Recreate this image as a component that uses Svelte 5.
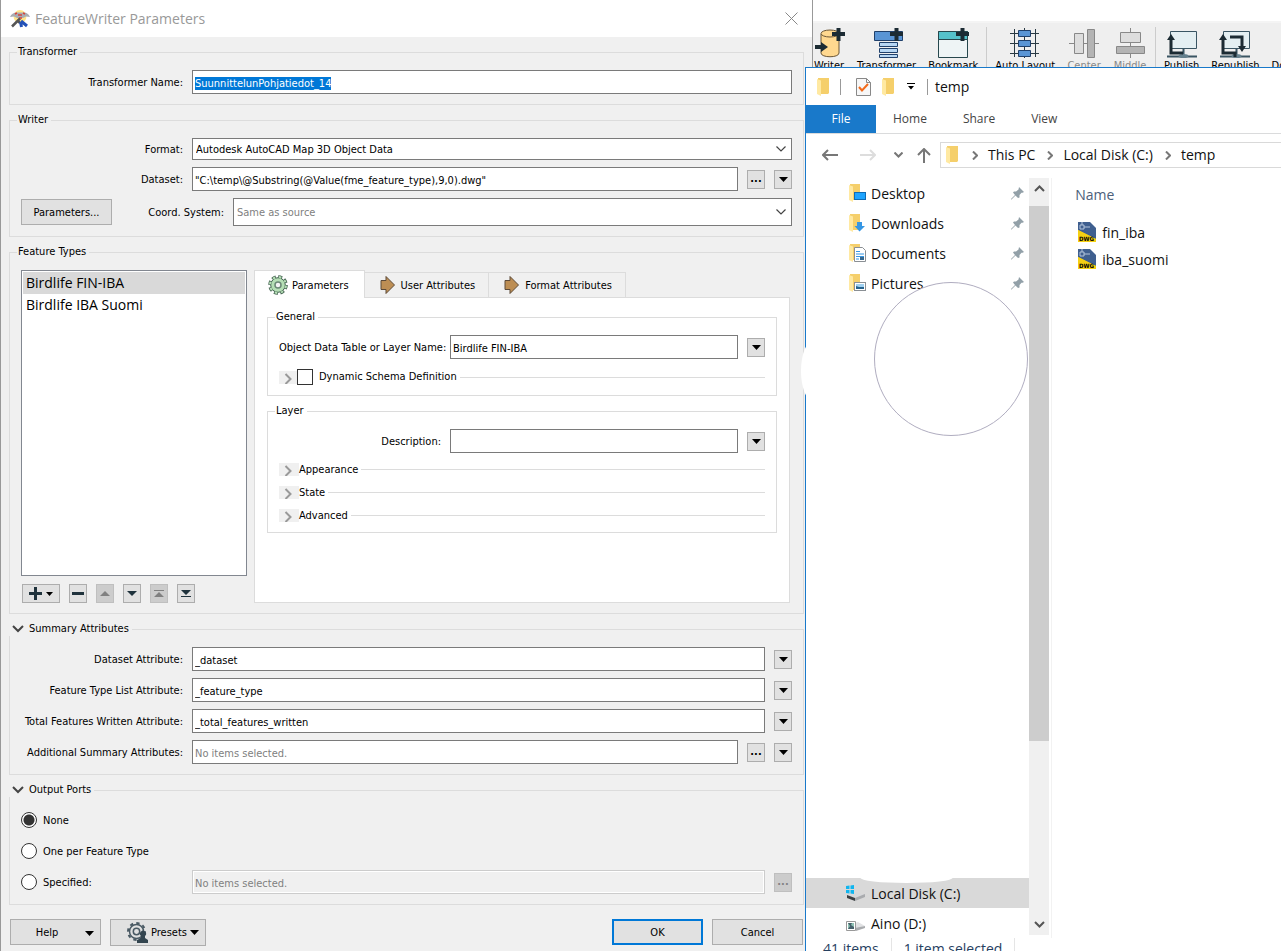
<script>
  import { onMount } from 'svelte';

  let transformerName = $state('SuunnittelunPohjatiedot_14');
  let dataset = $state('"C:\\temp\\@Substring(@Value(fme_feature_type),9,0).dwg"');
  let layerName = $state('Birdlife FIN-IBA');
  let description = $state('');
  let port = $state('none');
  let selected = $state(0);
  let activeTab = $state(0);
  let nameInput;

  const featureTypes = ['Birdlife FIN-IBA', 'Birdlife IBA Suomi'];
  const tabs = ['Parameters', 'User Attributes', 'Format Attributes'];
  const sections = ['Appearance', 'State', 'Advanced'];
  const listActions = ['minus', 'up', 'down', 'top', 'bottom'];
  const summary = $state([
    { id: 'dataset-attr', label: 'Dataset Attribute:', value: '_dataset' },
    { id: 'type-attr', label: 'Feature Type List Attribute:', value: '_feature_type' },
    { id: 'total-attr', label: 'Total Features Written Attribute:', value: '_total_features_written' },
  ]);
  const tools = [
    { name: 'Writer' },
    { name: 'Transformer' },
    { name: 'Bookmark' },
    { sep: true },
    { name: 'Auto Layout' },
    { name: 'Center', off: true },
    { name: 'Middle', off: true },
    { sep: true },
    { name: 'Publish' },
    { name: 'Republish' },
    { name: 'Download' },
  ];
  const places = ['Desktop', 'Downloads', 'Documents', 'Pictures'];
  const files = ['fin_iba', 'iba_suomi'];

  onMount(() => {
    // the name is ready to be typed over when the dialog opens
    nameInput.focus();
    nameInput.select();
  });
</script>

{#snippet arrow()}
  <svg class="arrow" width="9" height="5" viewBox="0 0 9 5"><path d="M0 0h9L4.500 5z" fill="currentColor" /></svg>
{/snippet}

{#snippet menuButton(label)}
  <button class="mini" aria-label={label}>{@render arrow()}</button>
{/snippet}

{#snippet chevron()}
  <svg class="chevron" width="10" height="6" viewBox="0 0 10 6"><path d="M.5.5 5 5 9.500.5" fill="none" stroke="#444" stroke-width="1.200" /></svg>
{/snippet}

{#snippet expander()}
  <svg class="expander" width="20" height="13" viewBox="0 0 20 13"><rect width="20" height="13" fill="#f0f0f0" /><path d="M6.500 3 11.500 8l-5 5" fill="none" stroke="#999" stroke-width="2" /></svg>
{/snippet}

{#snippet collapse()}
  <svg width="12" height="8" viewBox="0 0 12 8"><path d="M1 1l5 5 5-5" fill="none" stroke="#444" stroke-width="2" /></svg>
{/snippet}

{#snippet folder()}
  <svg width="13" height="18" viewBox="0 0 13 18"><path d="M1 0h11v15l-1 1H1z" fill="#f5cf6b" /><path d="M0 1l4 1.500V18L0 16z" fill="#ffe9a2" /></svg>
{/snippet}

{#snippet plus()}
  <path d="M20 6h13M26.500 0v13" stroke="#1c2b33" stroke-width="4" />
{/snippet}

{#snippet toolIcon(name)}
  <svg width="34" height="30" viewBox="0 0 34 30" fill="none">
    {#if name === 'Writer'}
      <path d="M9 6v19c0 5 18 5 18 0V6" fill="#ffd88f" stroke="#6b5636" />
      <ellipse cx="18" cy="5.500" rx="9" ry="3.500" fill="#ffd88f" stroke="#6b5636" />
      <path d="M3 19h7" stroke="#1c2b33" stroke-width="4" />
      <path d="M9 14l7 5-7 5z" fill="#1c2b33" />
      {@render plus()}
    {:else if name === 'Transformer'}
      <path d="M4.500 3.500h28v9h-28z" fill="#5a95d5" stroke="#20406b" />
      <path d="M9.500 14.500h18v4h-18zM9.500 20.500h18v4h-18zM9.500 26.500h18v3h-18z" fill="#b7d6f3" stroke="#20406b" />
      {@render plus()}
    {:else if name === 'Bookmark'}
      <path d="M2.500 3.500h29v26h-29z" fill="#eef4f5" stroke="#26474d" />
      <path d="M2.500 3.500h29v8h-29z" fill="#55c2cb" stroke="#26474d" />
      {@render plus()}
    {:else if name === 'Auto Layout'}
      <path d="M6.500 1v28M16.500 0v30M27.500 1v28M2 5.500h29M2 15.500h29M2 25.500h29" stroke="#2a3a44" />
      <path d="M10.500 2.500h12v6h-12zM10.500 12.500h12v6h-12zM10.500 22.500h12v6h-12z" fill="#5a95d5" stroke="#20406b" />
    {:else if name === 'Center'}
      <path d="M2 15.500h30" stroke="#888" />
      <path d="M7.500 5.500h9v20h-9z" fill="#ddd" stroke="#888" />
      <path d="M20.500 1.500h7v28h-7z" fill="#b4b4b4" stroke="#888" />
    {:else if name === 'Middle'}
      <path d="M17.500 0v30" stroke="#888" />
      <path d="M7.500 4.500h20v10h-20z" fill="#ddd" stroke="#888" />
      <path d="M3.500 18.500h28v7h-28z" fill="#b4b4b4" stroke="#888" />
    {:else}
      <path d="M5.500 3.500h26v17h-26z" fill="#e4eff2" stroke="#3a5563" />
      <path d="M18.500 21v6M2 28.500h30" stroke="#3a5563" stroke-width="2" />
      <ellipse cx="18.500" cy="28" rx="5" ry="2" fill="#66818e" />
      {#if name === 'Republish'}
        <path d="M5 11v14h12v4M12 9h12v10" stroke="#1c2b33" stroke-width="3" />
        <path d="M1 12l4-6 4 6zM20 18l4 6 4-6z" fill="#1c2b33" />
      {:else}
        <path d="M6 11v14h12" stroke="#1c2b33" stroke-width="3" />
        <path d="M2 12l4-6 4 6z" fill="#1c2b33" />
      {/if}
    {/if}
  </svg>
{/snippet}

{#snippet placeIcon(name)}
  <svg width="17" height="18" viewBox="0 0 17 18">
    <path d="M1 0h10v15l-1 1H1z" fill="#f5cf6b" />
    <path d="M0 1l4 1.500V18L0 16z" fill="#ffe9a2" />
    {#if name === 'Desktop'}
      <rect x="5.500" y="8.500" width="11" height="7" fill="#1ea4ff" stroke="#0f6cb5" />
    {:else if name === 'Downloads'}
      <path d="M8 8h5v4h3l-5.500 5.500L5.500 12H8z" fill="#3596e4" />
    {:else if name === 'Documents'}
      <path d="M5.500 3.500h8l3 3v11h-11z" fill="#fff" stroke="#8a8f94" />
      <path d="M7 7.500h4M7 10h8M7 12.500h8M7 15h3" stroke="#3596e4" />
      <rect x="11" y="13" width="4" height="3" fill="#35678e" />
    {:else}
      <rect x="5.500" y="8.500" width="11" height="8" fill="#fff" stroke="#8a8f94" />
      <path d="M7 10h8v5H7z" fill="#9fd0f0" /><path d="M7 12l3 1 5 0v2H7z" fill="#24628d" />
    {/if}
  </svg>
{/snippet}

<div class="desktop">
  <main class="dialog">
    <header class="titlebar">
      <svg width="20" height="18" viewBox="0 0 20 18">
        <circle cx="10" cy="6.500" r="6.500" fill="#ffe58a" />
        <path d="M0 7Q2 2 8 2.500h5Q18 2 20 7l-4-.5-3 1.500H7L4 6.500z" fill="#a9adb2" />
        <path d="M5 4l2-1M13 3l2 1M8 5h4M9 8h3" stroke="#d6453c" stroke-width="1.500" />
        <path d="M2 16.500l8-8M7 10l3 3" stroke="#555" stroke-width="2.500" />
        <path d="M11 11l6 5M10.500 12l1 5" stroke="#2352b8" stroke-width="3" />
      </svg>
      <h1>FeatureWriter Parameters</h1>
      <button class="close" aria-label="Close">
        <svg width="13" height="13" viewBox="0 0 13 13"><path d="M.5.5l12 12M12.500.5l-12 12" stroke="#888" /></svg>
      </button>
    </header>

    <form class="body" onsubmit={(e) => e.preventDefault()}>
      <fieldset>
        <legend>Transformer</legend>
        <div class="row">
          <label for="name">Transformer Name:</label>
          <input id="name" type="text" bind:value={transformerName} bind:this={nameInput} />
        </div>
      </fieldset>

      <fieldset>
        <legend>Writer</legend>
        <div class="row">
          <label for="format">Format:</label>
          <div class="combo">
            <select id="format"><option>Autodesk AutoCAD Map 3D Object Data</option></select>
            {@render chevron()}
          </div>
        </div>
        <div class="row">
          <label for="dataset">Dataset:</label>
          <input id="dataset" type="text" bind:value={dataset} />
          <button class="mini dots" aria-label="Browse dataset">...</button>
          {@render menuButton('Dataset options')}
        </div>
        <div class="row">
          <button class="push">Parameters...</button>
          <label class="coord" for="coord">Coord. System:</label>
          <div class="combo tall">
            <select id="coord" class="hint"><option>Same as source</option></select>
            {@render chevron()}
          </div>
        </div>
      </fieldset>

      <fieldset>
        <legend>Feature Types</legend>
        <div class="types">
          <div class="side">
            <ul class="list">
              {#each featureTypes as type, i}
                <li><button class:selected={selected === i} onclick={() => (selected = i)}>{type}</button></li>
              {/each}
            </ul>
            <div class="actions">
              <button class="mini add" aria-label="Add">
                <svg width="13" height="13" viewBox="0 0 13 13"><path d="M0 6.500h13M6.500 0v13" stroke="#1f323c" stroke-width="3" /></svg>
                <svg width="7" height="4" viewBox="0 0 7 4"><path d="M0 0h7L3.500 4z" /></svg>
              </button>
              {#each listActions as action}
                <button class="mini" aria-label={action} disabled={action === 'up' || action === 'top'}>
                  <svg width="14" height="9" viewBox="0 0 14 9" fill={action === 'up' || action === 'top' ? '#808080' : '#1f323c'}>
                    {#if action === 'minus'}<path d="M1 3h12v3H1z" />
                    {:else if action === 'up'}<path d="M2 7h10L7 2z" />
                    {:else if action === 'down'}<path d="M2 2h10L7 7z" />
                    {:else if action === 'top'}<path d="M2 1h10v1H2zM2 8h10L7 3z" />
                    {:else}<path d="M2 1h10L7 6zM2 7h10v1H2z" />{/if}
                  </svg>
                </button>
              {/each}
            </div>
          </div>

          <div class="pane">
            <div class="tabs" role="tablist">
              {#each tabs as tab, i}
                <button role="tab" aria-selected={activeTab === i} class:active={activeTab === i} onclick={() => (activeTab = i)}>
                  {#if i === 0}
                    <svg width="20" height="20" viewBox="0 0 20 20">
                      <circle cx="10" cy="10" r="8.300" fill="none" stroke="#42614f" stroke-width="3" stroke-dasharray="4 2.520" />
                      <circle cx="10" cy="10" r="7.300" fill="#b5dfb5" stroke="#42614f" />
                      <circle cx="10" cy="10" r="8" fill="none" stroke="#b5dfb5" stroke-width="2" stroke-dasharray="2.500 3.780" stroke-dashoffset="-.7" />
                      <circle cx="10" cy="10" r="3" fill="#f4f4f4" stroke="#6b8876" stroke-width="1.500" />
                    </svg>
                  {:else}
                    <svg width="16" height="18" viewBox="0 0 16 18"><path d="M1 4.500h5v-4L14.500 9 6 17.500v-4H1z" fill="#bd8e54" stroke="#5d4a38" /></svg>
                  {/if}
                  <span>{tab}</span>
                </button>
              {/each}
            </div>
            <div class="panel">
              <fieldset>
                <legend>General</legend>
                <div class="row">
                  <label for="layer">Object Data Table or Layer Name:</label>
                  <input id="layer" type="text" bind:value={layerName} />
                  {@render menuButton('Layer name options')}
                </div>
                <div class="section check">
                  {@render expander()}
                  <input id="dynamic" type="checkbox" />
                  <label for="dynamic">Dynamic Schema Definition</label>
                </div>
              </fieldset>
              <fieldset>
                <legend>Layer</legend>
                <div class="row">
                  <label for="description">Description:</label>
                  <input id="description" type="text" bind:value={description} />
                  {@render menuButton('Description options')}
                </div>
                {#each sections as section}
                  <button class="section">{@render expander()}{section}</button>
                {/each}
              </fieldset>
            </div>
          </div>
        </div>
      </fieldset>

      <fieldset class="folding">
        <legend>{@render collapse()}Summary Attributes</legend>
        {#each summary as item}
          <div class="row">
            <label for={item.id}>{item.label}</label>
            <input id={item.id} type="text" bind:value={item.value} />
            {@render menuButton(item.label)}
          </div>
        {/each}
        <div class="row">
          <label for="additional">Additional Summary Attributes:</label>
          <input id="additional" type="text" placeholder="No items selected." />
          <button class="mini dots" aria-label="Choose attributes">...</button>
          {@render menuButton('Additional attribute options')}
        </div>
      </fieldset>

      <fieldset class="folding">
        <legend>{@render collapse()}Output Ports</legend>
        <div class="row">
          <label class="radio"><input type="radio" value="none" bind:group={port} /><span>None</span></label>
        </div>
        <div class="row">
          <label class="radio"><input type="radio" value="type" bind:group={port} /><span>One per Feature Type</span></label>
        </div>
        <div class="row">
          <label class="radio"><input type="radio" value="specified" bind:group={port} /><span>Specified:</span></label>
          <input type="text" placeholder="No items selected." aria-label="Specified ports" disabled />
          <button class="mini dots" aria-label="Choose ports" disabled>...</button>
        </div>
      </fieldset>

      <footer>
        <button class="push menu"><span>Help</span>{@render arrow()}</button>
        <button class="push presets">
          <svg width="21" height="21" viewBox="0 0 21 21">
            <g fill="none" stroke="#4a5a64"><circle cx="9.500" cy="9.500" r="7" stroke-width="1.500" /><circle cx="9.500" cy="9.500" r="8.500" stroke-width="2" stroke-dasharray="3.300 3.300" /><circle cx="9.500" cy="9.500" r="3.200" stroke-width="1.500" /></g>
            <path d="M10 21v-3l4-2v-2a3 3 0 1 1 4 0v2l3 2v3z" fill="#33454f" />
          </svg>
          Presets{@render arrow()}
        </button>
        <button class="push ok">OK</button>
        <button class="push">Cancel</button>
      </footer>
    </form>
  </main>

  <div class="right">
    <nav class="toolbar">
      {#each tools as tool}
        {#if tool.sep}
          <i></i>
        {:else}
          <button disabled={tool.off}>{@render toolIcon(tool.name)}<span>{tool.name}</span></button>
        {/if}
      {/each}
    </nav>

    <section class="explorer">
      <header>
        {@render folder()}
        <i></i>
        <svg class="props" width="15" height="18" viewBox="0 0 15 18"><path d="M.5.5h10l4 4v13H.5z" fill="#f7f7f7" stroke="#888" /><path d="M10.500.5v4h4" fill="none" stroke="#888" /><path d="M3 9l3 3.500L12 6" fill="none" stroke="#f26a1b" stroke-width="2" /></svg>
        {@render folder()}
        <svg class="quick" width="8" height="7" viewBox="0 0 8 7"><path d="M0 0h8v1H0zM1 3h6L4 6.500z" /></svg>
        <i></i>
        <h2>temp</h2>
      </header>
      <nav class="ribbon">
        <button class="file">File</button>
        <button>Home</button>
        <button>Share</button>
        <button>View</button>
      </nav>
      <div class="address">
        <button aria-label="Back"><svg width="16" height="12" viewBox="0 0 16 12"><path d="M16 6H1M6 1L1 6l5 5" fill="none" stroke="#777" stroke-width="2" /></svg></button>
        <button aria-label="Forward"><svg width="16" height="12" viewBox="0 0 16 12"><path d="M0 6h15M10 1l5 5-5 5" fill="none" stroke="#ddd" stroke-width="2" /></svg></button>
        <button aria-label="Recent"><svg width="9" height="6" viewBox="0 0 9 6"><path d="M.5.5l4 4 4-4" fill="none" stroke="#777" stroke-width="2" /></svg></button>
        <button aria-label="Up"><svg width="14" height="15" viewBox="0 0 14 15"><path d="M7 15V1M1 7l6-6 6 6" fill="none" stroke="#777" stroke-width="2" /></svg></button>
        <div class="path">
          {@render folder()}
          {#each ['This PC', 'Local Disk (C:)', 'temp'] as part}
            <svg width="6" height="9" viewBox="0 0 6 9"><path d="M1 .5l4 4-4 4" fill="none" stroke="#777" stroke-width="2" /></svg>
            <a href="#top">{part}</a>
          {/each}
        </div>
      </div>

      <div class="content">
        <div class="tree">
          {#each places as place}
            <a href="#top">
              {@render placeIcon(place)}
              <span>{place}</span>
              <svg width="13" height="13" viewBox="0 0 13 13"><path d="M8 0l5 5-1.500.7-1 0L8.500 8l0 2.500L7 11 4.500 8.500.5 12.500H0V12l4-4L2 5.500 3 4.500h2L7.500 2.500z" fill="#92a0a8" /></svg>
            </a>
          {/each}
          <a class="drive current" href="#top">
            <svg width="20" height="16" viewBox="0 0 20 16"><path d="M1 10l9-3 9 3-10 5-8-3z" fill="#d7d8da" /><path d="M1 10l8 3v3l-8-3z" fill="#3c4043" /><path d="M9 13l10-4v3L9 16z" fill="#a9abae" /><path d="M0 1l3.500-.5V4H0zM4.500.4 8 0v4H4.500zM0 5h3.500v3.500L0 8zM4.500 5H8v4l-3.500-.5z" fill="#10b5ef" /></svg>
            <span>Local Disk (C:)</span>
          </a>
          <a class="drive" href="#top">
            <svg width="20" height="16" viewBox="0 0 20 16"><path d="M6 9l6-2 7 4-9 3z" fill="#e1e2e4" /><path d="M9 13l10-2v2l-9 3z" fill="#a9abae" /><path d="M.5 6.500h9v9h-9z" fill="#fff" stroke="#999" /><path d="M2 8h6v6H2z" fill="#8fc3b5" /><path d="M2 8h4l-1 2 3 2v2H2l2-3z" fill="#46606b" /></svg>
            <span>Aino (D:)</span>
          </a>
          <div class="lens"></div>
        </div>
        <div class="scroll">
          <svg width="11" height="7" viewBox="0 0 11 7"><path d="M1 6l4.500-4.500L10 6" fill="none" stroke="#555" stroke-width="2" /></svg>
          <div class="thumb"></div>
          <svg width="11" height="7" viewBox="0 0 11 7"><path d="M1 1l4.500 4.500L10 1" fill="none" stroke="#555" stroke-width="2" /></svg>
        </div>
        <div class="files">
          <h3>Name</h3>
          {#each files as file}
            <a href="#top">
              <svg width="18" height="20" viewBox="0 0 18 20"><path d="M0 0h12l6 6v14H0z" fill="#3f5f8f" /><path d="M0 8l18 9v3H0z" fill="#f5d013" /><path d="M0 8l18 9v3H0v-2z" fill="#f5d013" /><path d="M2 3h4v4H2zM4 0v3M6 5h6" fill="none" stroke="#b5c6dc" /><text x="1" y="19" font-size="6" font-weight="bold" font-family="DejaVu Sans Condensed, sans-serif">DWG</text></svg>
              <span>{file}</span>
            </a>
          {/each}
        </div>
      </div>
      <footer><span>41 items</span><span>1 item selected</span></footer>
    </section>
  </div>
</div>

<style>
  :global(body) {
    margin: 0;
    background: #fff;
  }
  .desktop {
    display: grid;
    grid-template-columns: minmax(0, 813fr) minmax(0, 468fr);
    height: 100vh;
    overflow: hidden;
    font: 11px/14px 'DejaVu Sans Condensed', 'DejaVu Sans', sans-serif;
    color: #000;
  }
  svg {
    flex: none;
  }
  button {
    font: inherit;
    color: inherit;
    background: none;
    border: 0;
    padding: 0;
  }
  a {
    color: inherit;
    text-decoration: none;
  }

  /* parameters dialog */
  .dialog {
    background: #f0f0f0;
    border-left: 1px solid #999;
    border-right: 1px solid #999;
  }
  .titlebar {
    display: flex;
    align-items: center;
    gap: 5px;
    height: 37px;
    padding: 0 14px 0 9px;
    background: #fff;
  }
  h1 {
    flex: 1;
    margin: 0;
    font: 14px/20px 'Open Sans', sans-serif;
    color: #999;
  }
  .close {
    display: flex;
  }
  .body {
    padding: 8px 8px 0;
  }
  fieldset {
    min-width: 0;
    margin: 0 0 8px;
    padding: 11px 11px 10px;
    border: 1px solid #dcdcdc;
  }
  legend {
    margin-left: -4px;
    padding: 0 3px 0 1px;
  }
  .folding legend {
    display: flex;
    align-items: center;
    gap: 5px;
    margin-left: -12px;
    padding-left: 3px;
    background: #f0f0f0;
  }
  .row {
    display: flex;
    align-items: center;
    gap: 9px;
    min-height: 22px;
  }
  .row + .row {
    margin-top: 7px;
  }
  .row > label {
    flex: none;
    width: 162px;
    padding-top: 2px;
    text-align: right;
    white-space: nowrap;
  }
  .row > .coord {
    width: 103px;
  }
  input[type='text'] {
    flex: 1;
    min-width: 0;
    height: 24px;
    box-sizing: border-box;
    padding: 2px 2px 0;
    border: 1px solid #7a7a7a;
    background: #fff;
    font: inherit;
    color: #000;
    outline: 0;
  }
  input::selection {
    background: #0078d7;
    color: #fff;
  }
  input::placeholder {
    color: #808080;
    opacity: 1;
  }
  input[type='text']:disabled {
    border-color: #ccc;
    background: #f0f0f0;
    box-shadow: inset 0 0 0 1px #fff;
  }
  .combo {
    position: relative;
    flex: 1;
    height: 22px;
  }
  .combo.tall {
    height: 28px;
  }
  select {
    width: 100%;
    height: 100%;
    padding: 2px 3px 0;
    border: 1px solid #7a7a7a;
    border-radius: 0;
    background: #fff;
    font: inherit;
    color: #000;
    appearance: none;
  }
  select.hint {
    color: #808080;
  }
  .chevron {
    position: absolute;
    top: calc(50% - 3px);
    right: 6px;
    pointer-events: none;
  }
  .mini {
    display: flex;
    flex: none;
    align-items: center;
    justify-content: center;
    gap: 4px;
    width: 18px;
    height: 19px;
    box-sizing: border-box;
    border: 1px solid #adadad;
    background: #e1e1e1;
  }
  .mini.add {
    width: 38px;
  }
  .mini.dots {
    font-weight: bold;
    line-height: 20px;
  }
  .mini:disabled {
    border-color: #bfbfbf;
    background: #ccc;
    color: #838383;
  }
  .push {
    width: 91px;
    height: 26px;
    box-sizing: border-box;
    padding-top: 2px;
    border: 1px solid #adadad;
    background: #e1e1e1;
  }

  .types {
    display: grid;
    grid-template-columns: minmax(0, 226fr) minmax(0, 536fr);
    gap: 7px;
    padding-right: 2px;
  }
  .side {
    display: flex;
    flex-direction: column;
    gap: 8px;
  }
  .list {
    flex: 1;
    min-height: 302px;
    margin: 0;
    padding: 1px;
    border: 1px solid #828790;
    background: #fff;
    list-style: none;
  }
  .list button {
    display: block;
    width: 100%;
    padding: 0 3px;
    font: 14px/22px 'Open Sans', sans-serif;
    text-align: left;
  }
  .list .selected {
    background: #d9d9d9;
  }
  .actions {
    display: flex;
    gap: 9px;
    padding-left: 1px;
  }
  .pane {
    display: flex;
    flex-direction: column;
  }
  .tabs {
    display: flex;
    align-items: flex-end;
    height: 27px;
  }
  .tabs button {
    display: flex;
    align-items: center;
    gap: 5px;
    height: 25px;
    padding: 0 13px 0 15px;
    border: 1px solid #dcdcdc;
    border-width: 1px 1px 0 0;
  }
  .tabs span {
    padding-top: 2px;
  }
  .tabs .active {
    z-index: 1;
    gap: 4px;
    height: 28px;
    margin-bottom: -1px;
    padding: 0 15px 0 13px;
    border-left-width: 1px;
    background: #fff;
  }
  .panel {
    flex: 1;
    padding: 12px 12px 60px;
    border: 1px solid #dcdcdc;
    background: #fff;
  }
  .section {
    display: flex;
    align-items: center;
    width: 100%;
    height: 13px;
    margin-top: 10px;
  }
  .section::after {
    content: '';
    flex: 1;
    height: 1px;
    margin-left: 3px;
    background: #dcdcdc;
  }
  .check {
    height: 16px;
  }
  .check .expander {
    margin-right: -2px;
  }
  .check label {
    margin-left: 6px;
  }
  input[type='checkbox'],
  input[type='radio'] {
    flex: none;
    width: 16px;
    height: 16px;
    margin: 0;
    border: 1px solid #333;
    background: #fff;
    appearance: none;
  }
  input[type='radio'] {
    border-radius: 50%;
  }
  input[type='radio']:checked {
    background: radial-gradient(circle, #333 5px, #fff 6px);
  }
  .row > .radio {
    display: flex;
    align-items: center;
    gap: 6px;
    height: 24px;
    padding: 0;
  }
  .radio span {
    padding-top: 2px;
  }
  .body > footer {
    display: flex;
    gap: 9px;
    margin: 14px 1px 0;
  }
  .push.menu,
  .push.presets {
    display: flex;
    align-items: center;
    padding: 2px 6px 0;
  }
  .push.menu span {
    flex: 1;
    padding-right: 8px;
  }
  .push.presets {
    justify-content: flex-end;
    gap: 3px;
    width: 96px;
    height: 27px;
    padding-top: 0;
  }
  .push.ok {
    margin-left: auto;
    border: 2px solid #0078d7;
  }

  /* workbench toolbar, partly behind the file window */
  .right {
    display: flex;
    flex-direction: column;
    min-width: 0;
    height: 100vh;
  }
  .toolbar {
    display: flex;
    gap: 12px;
    height: 44px;
    margin-top: 21px;
    border-top: 2px solid #f4f4f4;
    background: #efefef;
    overflow: hidden;
  }
  .toolbar button {
    display: flex;
    flex: none;
    flex-direction: column;
    align-items: center;
    gap: 1px;
    padding-top: 5px;
  }
  .toolbar button:first-child {
    width: 32px;
  }
  .toolbar button:disabled {
    color: #888;
  }
  .toolbar i {
    flex: none;
    width: 1px;
    margin: 4px -4px 0;
    background: #ccc;
  }

  /* file window */
  .explorer {
    position: relative;
    z-index: 1;
    display: flex;
    flex: 1;
    flex-direction: column;
    min-height: 0;
    margin-left: -8px;
    border-top: 1px solid #1979ca;
    border-left: 1px solid #1979ca;
    background: #fff;
    font: 14px/20px 'Open Sans', sans-serif;
    color: #111;
  }
  /* retouched bulge over the window edge */
  .explorer::before {
    content: '';
    position: absolute;
    top: 272px;
    left: -5px;
    width: 26px;
    height: 62px;
    border-radius: 50%;
    background: #fff;
  }
  .explorer > header {
    display: flex;
    align-items: center;
    height: 37px;
    padding-left: 11px;
  }
  .explorer > header i {
    width: 1px;
    height: 16px;
    margin: 0 15px 0 10px;
    background: #999;
  }
  .explorer > header i:nth-of-type(2) {
    margin: 0 7px 0 12px;
  }
  .props {
    margin-right: 11px;
  }
  .quick {
    margin-left: 12px;
  }
  h2,
  h3 {
    margin: 0;
    font: inherit;
  }
  .ribbon {
    display: flex;
    gap: 36px;
    height: 28px;
    border-bottom: 1px solid #dadbdc;
    font-size: 12px;
    color: #444;
  }
  .ribbon .file {
    width: 70px;
    margin-right: -19px;
    background: #1979ca;
    color: #fff;
  }
  .address {
    display: flex;
    align-items: center;
    padding: 8px 0 10px 16px;
  }
  .address button {
    display: flex;
    margin-right: 22px;
  }
  .address button:nth-child(2) {
    margin-right: 18px;
  }
  .address button:nth-child(3) {
    margin-right: 14px;
  }
  .address button:nth-child(4) {
    margin-right: 9px;
  }
  .path {
    display: flex;
    flex: 1;
    align-items: center;
    gap: 10px;
    height: 24px;
    padding-left: 5px;
    border: 1px solid #d9d9d9;
    border-right: 0;
    white-space: nowrap;
    overflow: hidden;
  }
  .path svg:first-child {
    margin-right: 3px;
  }
  .path a + svg {
    margin-left: 2px;
  }
  .content {
    display: flex;
    flex: 1;
    min-height: 0;
  }
  .tree {
    position: relative;
    display: flex;
    flex: 0 0 47%;
    flex-direction: column;
  }
  .tree a {
    display: flex;
    flex: none;
    align-items: center;
    gap: 5px;
    height: 30px;
    box-sizing: border-box;
    padding: 0 5px 0 43px;
  }
  .tree a span {
    flex: 1;
    padding-top: 2px;
  }
  .tree .drive {
    padding-left: 40px;
  }
  .tree .current {
    position: relative;
    margin-top: auto;
    background: #d9d9d9;
  }
  .current::before {
    content: '';
    position: absolute;
    top: -6px;
    left: 24%;
    width: 42%;
    height: 11px;
    border-radius: 50%;
    background: #fff;
  }
  .lens {
    position: absolute;
    top: 104px;
    right: 1px;
    width: 152px;
    height: 152px;
    border: 1px solid #b0adc0;
    border-radius: 50%;
    background: #fff;
  }
  .scroll {
    display: flex;
    flex: none;
    flex-direction: column;
    align-items: center;
    justify-content: space-between;
    width: 20px;
    margin-bottom: 3px;
    padding: 7px 0;
    box-sizing: border-box;
    background: #f0f0f0;
  }
  .thumb {
    width: 100%;
    flex: 0 0 72%;
    margin: 14px 0 auto;
    background: #cdcdcd;
  }
  .files {
    flex: 1;
    margin-left: 2px;
    padding: 7px 0 0 23px;
    border-left: 1px solid #f2f2f2;
  }
  .files h3 {
    margin-bottom: 13px;
    color: #4c607a;
  }
  .files a {
    display: flex;
    align-items: center;
    gap: 6px;
    height: 27px;
    padding-left: 3px;
  }
  .files a span {
    padding-top: 2px;
  }
  .explorer > footer {
    display: flex;
    height: 13px;
    padding-left: 17px;
    overflow: hidden;
    line-height: 22px;
    color: #26405f;
  }
  .explorer > footer span {
    margin-right: 12px;
    padding-right: 12px;
    border-right: 1px solid #e5e5e5;
  }
</style>
